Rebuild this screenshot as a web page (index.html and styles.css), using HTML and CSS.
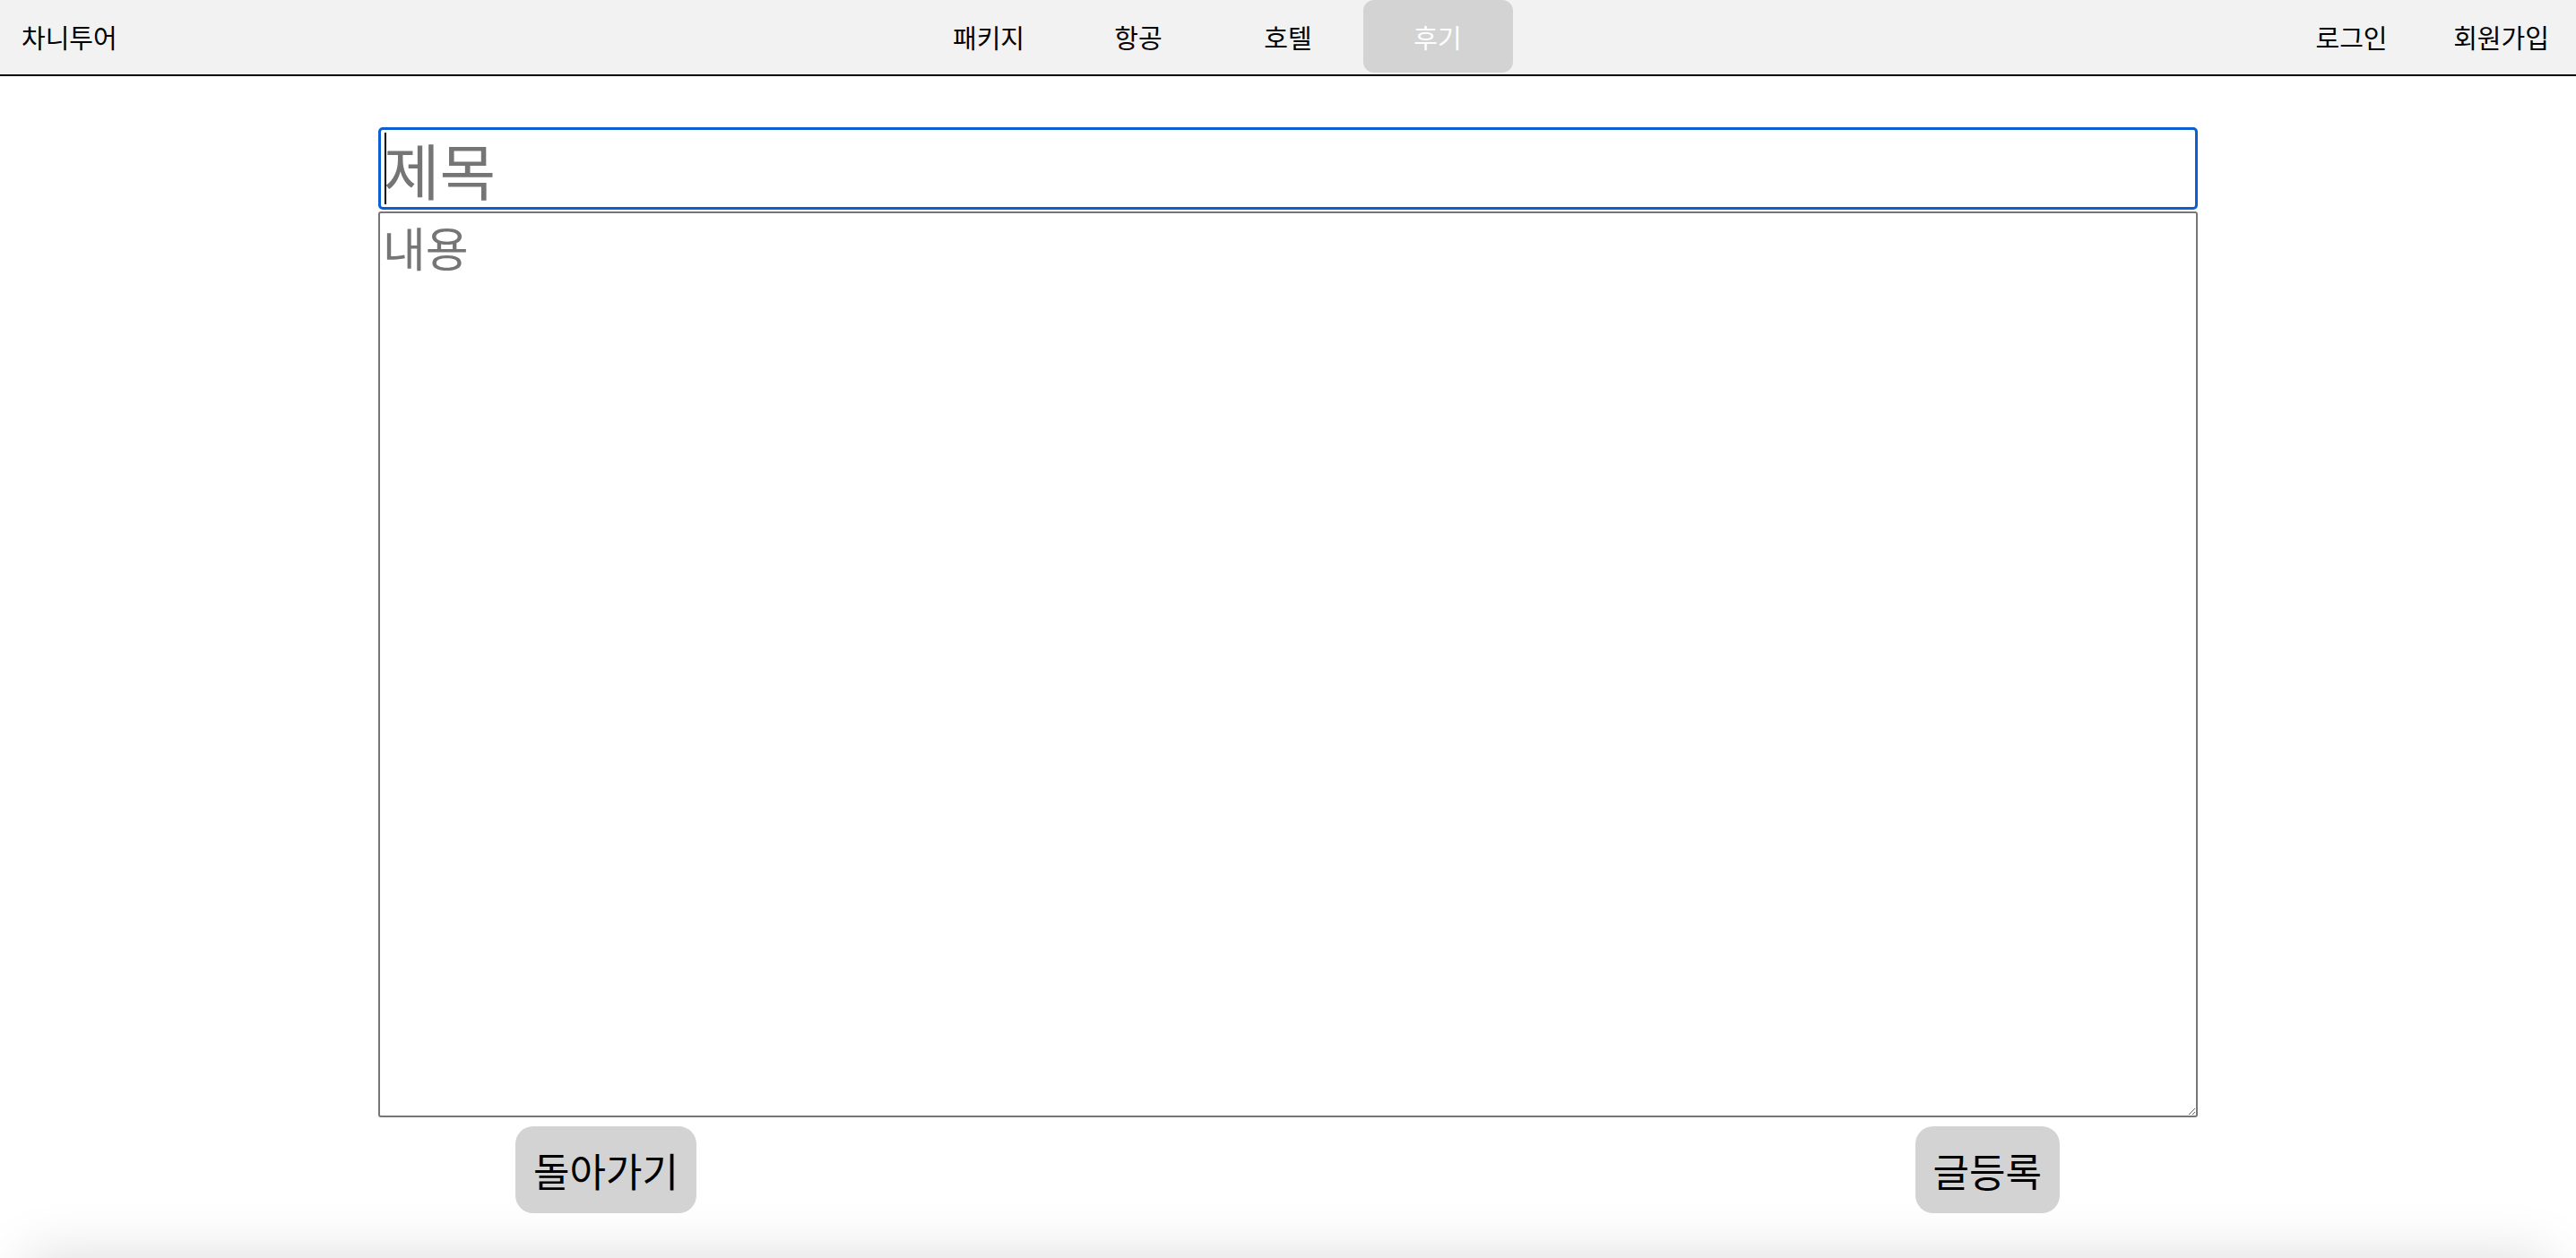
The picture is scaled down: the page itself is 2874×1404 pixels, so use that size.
FILE: index.html
```html
<!DOCTYPE html>
<html lang="ko">
<head>
<meta charset="utf-8">
<title>후기 작성</title>
<link rel="stylesheet" href="styles.css">
</head>
<body>
<header class="topbar">
  <div class="item logo">차니투어</div>
  <nav class="menu">
    <a class="item" href="#">패키지</a>
    <a class="item" href="#">항공</a>
    <a class="item" href="#">호텔</a>
    <a class="item active" href="#">후기</a>
  </nav>
  <div class="auth">
    <a class="item" href="#">로그인</a>
    <a class="item" href="#">회원가입</a>
  </div>
</header>
<main class="write">
  <div class="title-wrap">
    <input class="title" type="text" placeholder="제목">
    <span class="caret"></span>
  </div>
  <textarea class="content" placeholder="내용"></textarea>
  <div class="actions">
    <button class="btn" type="button">돌아가기</button>
    <button class="btn" type="button">글등록</button>
  </div>
</main>
<footer class="foot"></footer>
</body>
</html>
```
FILE: styles.css
```css
html, body {
  margin: 0;
  padding: 0;
  background: #ffffff;
}
body {
  font-family: "Noto Sans CJK KR", "Noto Sans", sans-serif;
  color: #000;
}
.topbar {
  display: flex;
  justify-content: space-between;
  align-items: flex-start;
  height: 83px;
  background: #f2f2f2;
  border-bottom: 2px solid #000;
}
.menu, .auth {
  display: flex;
}
.item {
  width: 167px;
  height: 81px;
  display: flex;
  align-items: center;
  justify-content: center;
  font-size: 29px;
  color: #000;
  text-decoration: none;
  border-radius: 12px;
}
.logo {
  justify-content: flex-start;
  padding-left: 24px;
  box-sizing: border-box;
}
.item.active {
  background: #d3d3d3;
  color: #ffffff;
}
.write {
  width: 2030px;
  margin: 57px auto 0;
}
.title-wrap {
  position: relative;
}
.title {
  display: block;
  width: 100%;
  height: 92px;
  box-sizing: border-box;
  border: 3px solid #0b5fd0;
  border-radius: 5px;
  padding: 0 3px;
  font-family: "Noto Sans CJK KR", "Noto Sans", sans-serif;
  font-size: 68px;
  outline: none;
  margin: 0;
}
.title::placeholder, .content::placeholder {
  color: #757575;
}
.caret {
  position: absolute;
  left: 7px;
  top: 6px;
  width: 2px;
  height: 80px;
  background: #000;
}
.content {
  display: block;
  width: 100%;
  height: 1011px;
  box-sizing: border-box;
  margin: 2px 0 0;
  border: 2px solid #767676;
  border-radius: 3px;
  padding: 0 3px;
  font-family: "Noto Sans CJK KR", "Noto Sans", sans-serif;
  font-size: 52px;
  outline: none;
}
.actions {
  display: flex;
  justify-content: space-between;
  padding: 10px 154px 0 153px;
}
.btn {
  height: 97px;
  padding: 0 20px;
  border: none;
  border-radius: 20px;
  background: #d3d3d3;
  font-family: "Noto Sans CJK KR", "Noto Sans", sans-serif;
  font-size: 44px;
  color: #000;
}
.foot {
  margin: 50px 30px 0;
  height: 200px;
  background: #fff;
  box-shadow: 0 0 60px rgba(0, 0, 0, 0.15);
}
```
